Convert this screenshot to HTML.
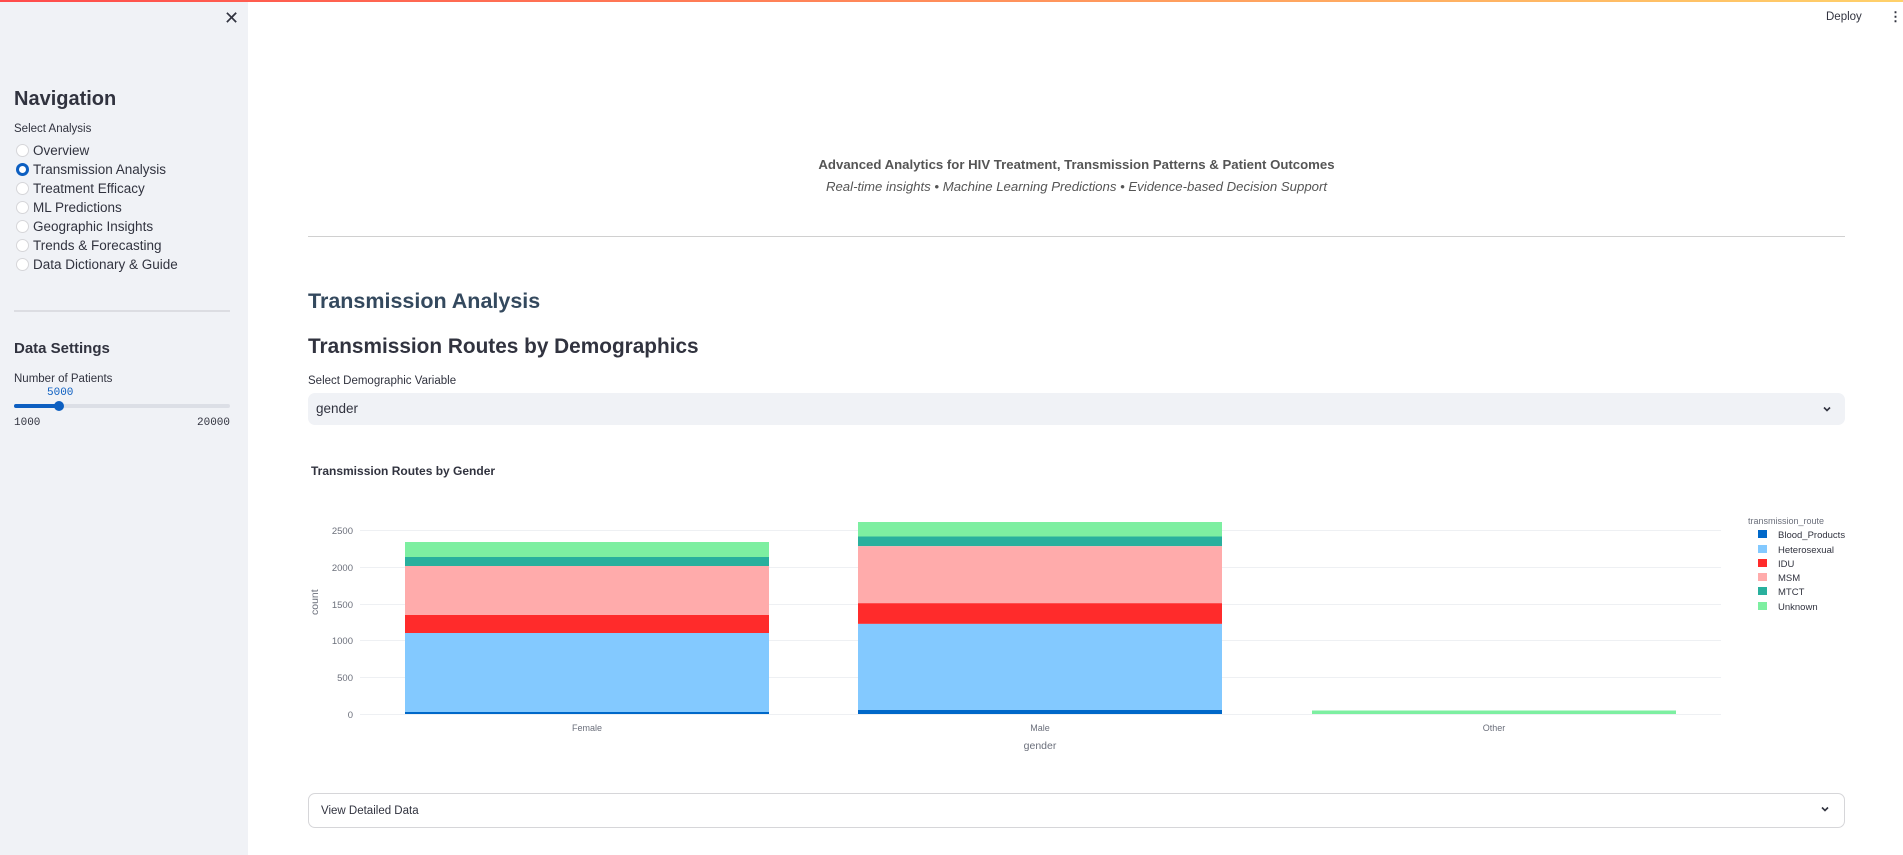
<!DOCTYPE html>
<html><head><meta charset="utf-8"><style>
*{box-sizing:border-box;margin:0;padding:0}
body{width:1903px;height:855px;overflow:hidden;background:#fff;font-family:"Liberation Sans",Arial,sans-serif;color:#31333f;position:relative}
.topbar{position:absolute;left:0;top:0;width:1903px;height:2px;background:linear-gradient(90deg,#ff4b4b,#ffd16a);z-index:5}
.side{position:absolute;left:0;top:0;width:248px;height:855px;background:#f0f2f6}
.abs{position:absolute;white-space:nowrap}
.radio{position:absolute;left:16px;width:13px;height:13px;border-radius:50%;background:#fff;border:1px solid #d6d6d9}
.radio.on{background:#fff;border:3.5px solid #0d5fc1}
.rl{position:absolute;left:33px;font-size:13.5px;color:#31333f}
</style></head><body>
<div class="topbar"></div>
<div class="side">
  <div class="abs" style="left:224px;top:8px;font-size:18px;color:#31333f">✕</div>
  <div class="abs" style="left:14px;top:88px;font-size:20px;font-weight:bold">Navigation</div>
  <div class="abs" style="left:14px;top:123px;font-size:11.5px">Select Analysis</div>
  <div class="radio" style="top:144px"></div><div class="rl" style="top:143px">Overview</div>
  <div class="radio on" style="top:163px"></div><div class="rl" style="top:162px">Transmission Analysis</div>
  <div class="radio" style="top:182px"></div><div class="rl" style="top:181px">Treatment Efficacy</div>
  <div class="radio" style="top:201px"></div><div class="rl" style="top:200px">ML Predictions</div>
  <div class="radio" style="top:220px"></div><div class="rl" style="top:219px">Geographic Insights</div>
  <div class="radio" style="top:239px"></div><div class="rl" style="top:238px">Trends &amp; Forecasting</div>
  <div class="radio" style="top:258px"></div><div class="rl" style="top:257px">Data Dictionary &amp; Guide</div>
  <div class="abs" style="left:14px;top:310px;width:216px;height:2px;background:#dcdde2"></div>
  <div class="abs" style="left:14px;top:340px;font-size:15px;font-weight:bold">Data Settings</div>
  <div class="abs" style="left:14px;top:373px;font-size:11.5px">Number of Patients</div>
  <div class="abs" style="left:47px;top:387px;font-size:11px;color:#0d5fc1;font-family:'Liberation Mono',monospace">5000</div>
  <div class="abs" style="left:14px;top:404px;width:216px;height:4px;border-radius:2px;background:#dcdfe6"></div>
  <div class="abs" style="left:14px;top:404px;width:45px;height:4px;border-radius:2px;background:#0d5fc1"></div>
  <div class="abs" style="left:54px;top:401px;width:10px;height:10px;border-radius:50%;background:#0d5fc1"></div>
  <div class="abs" style="left:14px;top:417px;font-size:11px;font-family:'Liberation Mono',monospace">1000</div>
  <div class="abs" style="left:197px;top:417px;font-size:11px;font-family:'Liberation Mono',monospace">20000</div>
</div>
<div class="abs" style="left:1826px;top:11px;font-size:11.5px">Deploy</div>
<div class="abs" style="left:1889px;top:9px;font-size:13px;font-weight:bold">⋮</div>

<div class="abs" style="left:308px;width:1537px;top:157px;text-align:center;font-size:13.2px;font-weight:bold;color:#555">Advanced Analytics for HIV Treatment, Transmission Patterns &amp; Patient Outcomes</div>
<div class="abs" style="left:308px;width:1537px;top:179px;text-align:center;font-size:13.2px;font-style:italic;color:#555">Real-time insights • Machine Learning Predictions • Evidence-based Decision Support</div>
<div class="abs" style="left:308px;top:236px;width:1537px;height:1px;background:#d0d0d0"></div>
<div class="abs" style="left:308px;top:289px;font-size:21.5px;font-weight:bold;color:#34495e">Transmission Analysis</div>
<div class="abs" style="left:308px;top:335px;font-size:20.8px;font-weight:bold">Transmission Routes by Demographics</div>
<div class="abs" style="left:308px;top:375px;font-size:11.5px">Select Demographic Variable</div>
<div class="abs" style="left:308px;top:393px;width:1537px;height:32px;border-radius:7px;background:#f0f2f6"></div>
<div class="abs" style="left:316px;top:401px;font-size:13.5px">gender</div>
<svg class="abs" style="left:1822px;top:404px" width="10" height="10" viewBox="0 0 10 10"><path d="M2 3.5L5 6.5L8 3.5" stroke="#31333f" stroke-width="1.6" fill="none"/></svg>

<svg class="abs" style="left:0;top:0" width="1903" height="855">
<text x="311" y="475" font-size="12" font-weight="bold" fill="#31333f" font-family="Liberation Sans">Transmission Routes by Gender</text>
<g stroke="#eef0f3" stroke-width="1">
<line x1="360" x2="1721" y1="530.5" y2="530.5"/><line x1="360" x2="1721" y1="567.5" y2="567.5"/><line x1="360" x2="1721" y1="604.5" y2="604.5"/><line x1="360" x2="1721" y1="640.5" y2="640.5"/><line x1="360" x2="1721" y1="677.5" y2="677.5"/><line x1="360" x2="1721" y1="714.5" y2="714.5"/>
</g>
<g font-size="9.5" fill="#6b6f7b" font-family="Liberation Sans" text-anchor="end">
<text x="353" y="534">2500</text><text x="353" y="571">2000</text><text x="353" y="608">1500</text><text x="353" y="644">1000</text><text x="353" y="681">500</text><text x="353" y="718">0</text>
</g>
<text transform="translate(318,615) rotate(-90)" font-size="10.5" fill="#6b6f7b" font-family="Liberation Sans">count</text>
<rect x="405" y="542" width="364" height="15" fill="#7defa1"/>
<rect x="405" y="557" width="364" height="9" fill="#29b09d"/>
<rect x="405" y="566" width="364" height="49" fill="#ffabab"/>
<rect x="405" y="615" width="364" height="18" fill="#ff2b2b"/>
<rect x="405" y="633" width="364" height="79" fill="#83c9ff"/>
<rect x="405" y="712" width="364" height="2" fill="#0068c9"/>
<rect x="858" y="522" width="364" height="14.5" fill="#7defa1"/>
<rect x="858" y="536.5" width="364" height="9.7" fill="#29b09d"/>
<rect x="858" y="546.2" width="364" height="57" fill="#ffabab"/>
<rect x="858" y="603.2" width="364" height="20.7" fill="#ff2b2b"/>
<rect x="858" y="623.9" width="364" height="86.1" fill="#83c9ff"/>
<rect x="858" y="710" width="364" height="4" fill="#0068c9"/>
<rect x="1312" y="710.5" width="364" height="3.5" fill="#7defa1"/>
<g font-size="9" fill="#6b6f7b" font-family="Liberation Sans" text-anchor="middle">
<text x="587" y="731">Female</text><text x="1040" y="731">Male</text><text x="1494" y="731">Other</text>
</g>
<text x="1040" y="749" font-size="10.5" fill="#6b6f7b" text-anchor="middle" font-family="Liberation Sans">gender</text>
<text x="1748" y="524" font-size="9" fill="#6b6f7b" font-family="Liberation Sans">transmission_route</text>
<g font-size="9.5" fill="#31333f" font-family="Liberation Sans">
<rect x="1758" y="530" width="9" height="8" fill="#0068c9"/><text x="1778" y="538">Blood_Products</text>
<rect x="1758" y="545" width="9" height="8" fill="#83c9ff"/><text x="1778" y="553">Heterosexual</text>
<rect x="1758" y="559" width="9" height="8" fill="#ff2b2b"/><text x="1778" y="567">IDU</text>
<rect x="1758" y="573" width="9" height="8" fill="#ffabab"/><text x="1778" y="581">MSM</text>
<rect x="1758" y="587" width="9" height="8" fill="#29b09d"/><text x="1778" y="595">MTCT</text>
<rect x="1758" y="602" width="9" height="8" fill="#7defa1"/><text x="1778" y="610">Unknown</text>
</g>
</svg>

<div class="abs" style="left:308px;top:793px;width:1537px;height:35px;border:1px solid #d6d6d9;border-radius:7px"></div>
<div class="abs" style="left:321px;top:805px;font-size:11.5px">View Detailed Data</div>
<svg class="abs" style="left:1820px;top:804px" width="10" height="10" viewBox="0 0 10 10"><path d="M2 3.5L5 6.5L8 3.5" stroke="#31333f" stroke-width="1.6" fill="none"/></svg>
</body></html>
